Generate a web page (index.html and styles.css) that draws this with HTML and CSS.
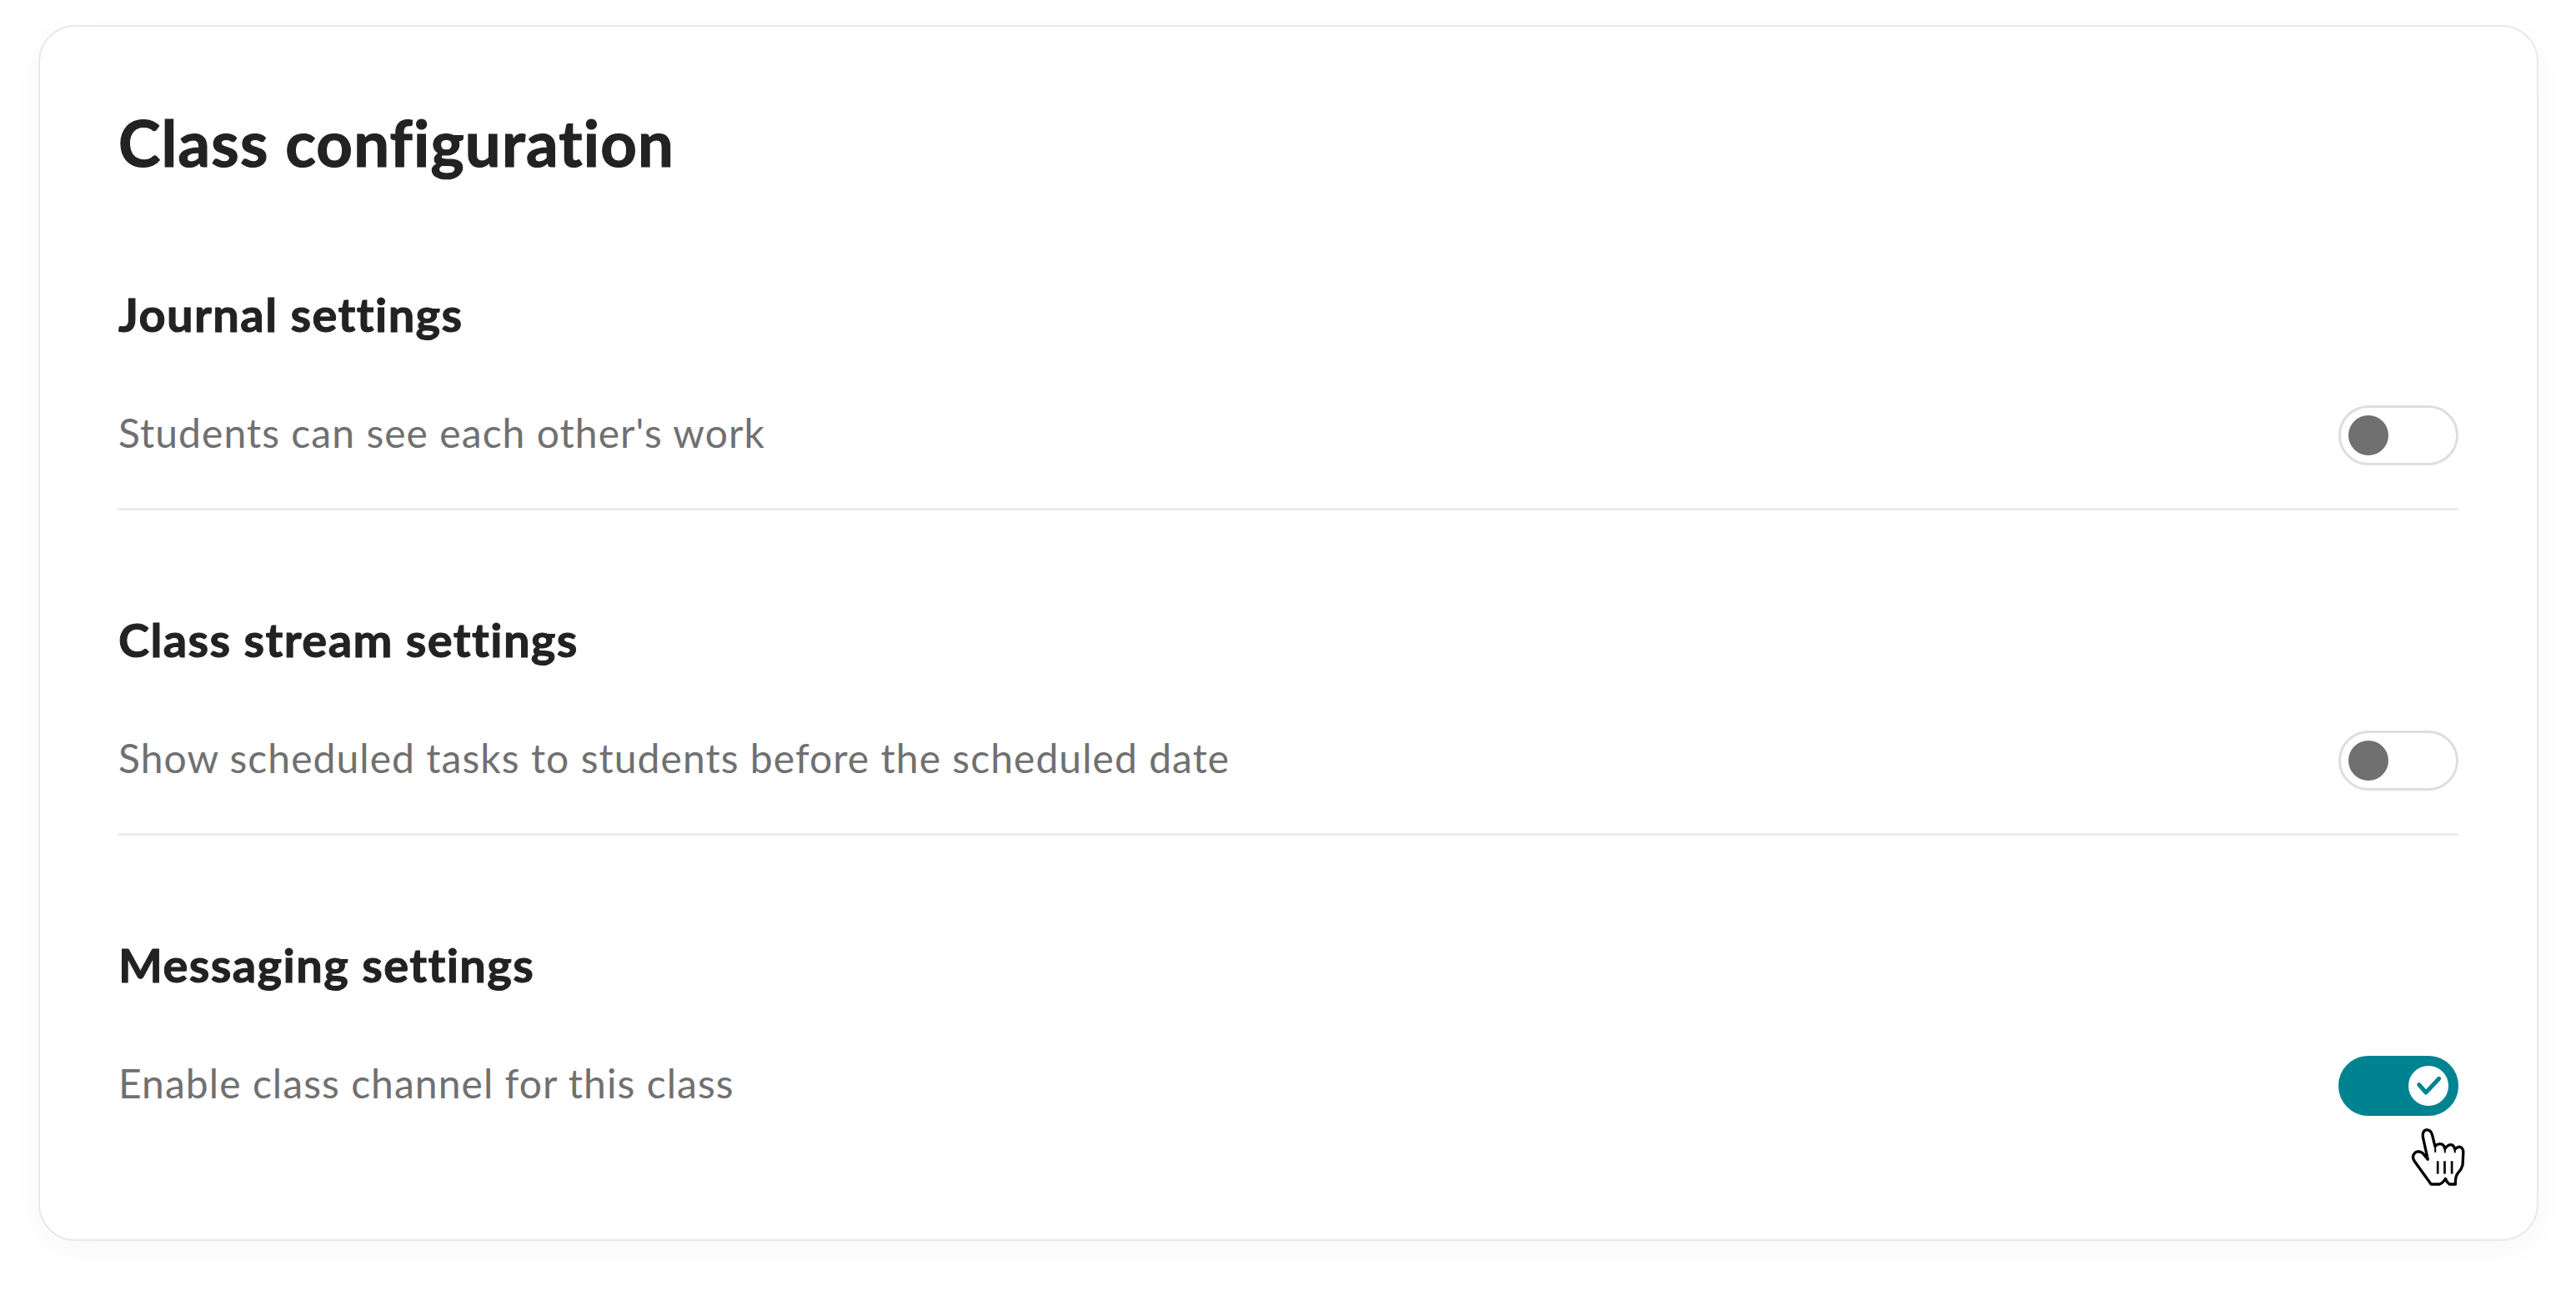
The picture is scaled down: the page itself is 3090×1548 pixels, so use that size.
FILE: index.html
```html
<!DOCTYPE html>
<html lang="en">
<head>
    <meta charset="UTF-8">
    <title>Class configuration</title>
    <link rel="stylesheet" href="styles.css">
</head>
<body>
    <div class="config-card">
        <h1>Class configuration</h1>

        <section class="settings-group">
            <h2>Journal settings</h2>
            <div class="setting-row">
                <span class="setting-label">Students can see each other's work</span>
                <span class="toggle"><span class="toggle-knob"></span></span>
            </div>
        </section>

        <section class="settings-group">
            <h2>Class stream settings</h2>
            <div class="setting-row">
                <span class="setting-label">Show scheduled tasks to students before the scheduled date</span>
                <span class="toggle"><span class="toggle-knob"></span></span>
            </div>
        </section>

        <section class="settings-group last">
            <h2>Messaging settings</h2>
            <div class="setting-row">
                <span class="setting-label">Enable class channel for this class</span>
                <span class="toggle on">
                    <span class="toggle-knob">
                        <svg viewBox="0 0 48 48" width="48" height="48">
                            <path d="M12.7 22.7 L21 32 L36.7 15.3" fill="none" stroke="#008391" stroke-width="5" stroke-linecap="round" stroke-linejoin="round"/>
                        </svg>
                    </span>
                    <svg class="cursor" viewBox="390 362 206 220" width="69" height="73">
                        <path d="M468 570 L408 487 Q396 470 410 456 Q424 446 438 458 L456 480 L438 398 Q436 376 452 373 Q468 374 472 392 L482 432 Q496 420 508 426 Q516 430 518 442 Q530 424 544 428 Q552 432 554 444 Q566 430 578 438 Q586 444 584 462 L582 500 Q578 516 566 528 Q554 542 556 570 L534 570 Q524 562 520 550 Q510 566 498 570 Z" fill="#fff" stroke="#000" stroke-width="10" stroke-linejoin="round"/>
                        <path d="M492 486 V532 M517 486 V532 M543 486 V532" fill="none" stroke="#000" stroke-width="8"/>
                        <path d="M483 432 V455 M518 442 V456 M554 444 V456" fill="none" stroke="#000" stroke-width="6"/>
                    </svg>
                </span>
            </div>
        </section>
    </div>
</body>
</html>
```

FILE: styles.css
```css
body {
    margin: 0;
    padding: 30px 45px 60px 46px;
    background-color: #fff;
    font-family: "Lato", "Open Sans", sans-serif;
    font-variant-ligatures: none;
}
.config-card {
    padding: 95px 94px 148px 94px;
    border: 2px solid #e8e8e8;
    border-radius: 44px;
    background-color: #fff;
    box-shadow: 0 10px 40px rgba(0, 0, 0, 0.03);
}
h1 {
    margin: 0 0 132px 0;
    font-size: 76px;
    line-height: 88px;
    font-weight: 700;
    letter-spacing: 1.2px;
    -webkit-text-stroke: 1.2px #222;
    color: #222;
}
h2 {
    margin: 0 0 79px 0;
    font-size: 56px;
    line-height: 60px;
    font-weight: 700;
    letter-spacing: 1.4px;
    -webkit-text-stroke: 1px #222;
    color: #222;
}
.settings-group {
    margin-bottom: 125px;
    padding-bottom: 51px;
    border-bottom: 3px solid #ececec;
}
.settings-group.last {
    margin-bottom: 0;
    padding-bottom: 0;
    border-bottom: none;
}
.setting-row {
    display: flex;
    justify-content: space-between;
    align-items: center;
    height: 72px;
}
.setting-label {
    padding-bottom: 7px;
    font-size: 48px;
    letter-spacing: 1.05px;
    color: #707070;
}
.toggle {
    position: relative;
    display: flex;
    align-items: center;
    width: 144px;
    height: 72px;
    padding: 0 9px;
    box-sizing: border-box;
    border: 3px solid #dedede;
    border-radius: 36px;
    background-color: #fff;
}
.toggle-knob {
    display: block;
    width: 48px;
    height: 48px;
    border-radius: 50%;
    background-color: #707070;
}
.toggle.on {
    justify-content: flex-end;
    border-color: #008391;
    background-color: #008391;
}
.toggle.on .toggle-knob {
    background-color: #fff;
}
.cursor {
    position: absolute;
    left: 82px;
    top: 82px;
}
```
